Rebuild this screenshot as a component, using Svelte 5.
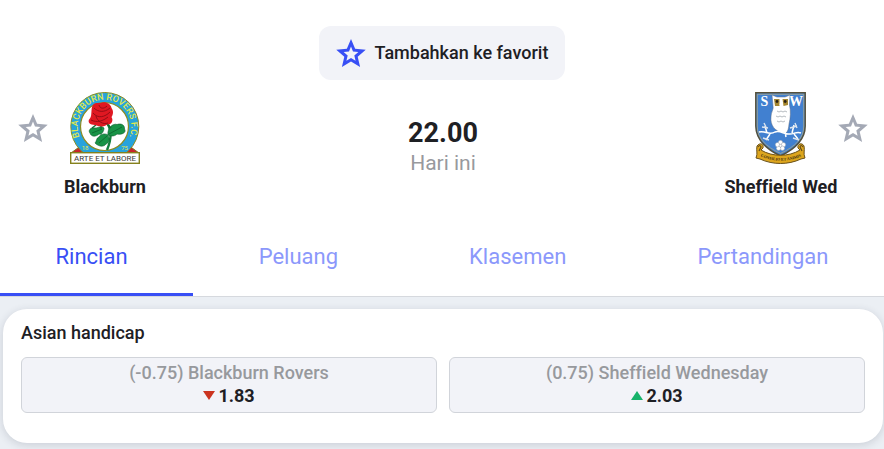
<script>
  let activeTab = $state('Rincian');
  let favorites = $state({ match: false, home: false, away: false });

  const tabs = ['Rincian', 'Peluang', 'Klasemen', 'Pertandingan'];

  const odds = [
    { label: '(-0.75) Blackburn Rovers', value: '1.83', trend: 'down' },
    { label: '(0.75) Sheffield Wednesday', value: '2.03', trend: 'up' }
  ];

  function toggleFavorite(key) {
    favorites[key] = !favorites[key];
  }
</script>

{#snippet star()}
  <svg class="star" viewBox="2 2 20 19" aria-hidden="true">
    <path d="M22 9.24l-7.19-.62L12 2 9.19 8.63 2 9.24l5.46 4.73L5.82 21 12 17.27 18.18 21l-1.63-7.03L22 9.24zM12 14.85l-3.1 1.9.85-3.55L7 10.8l3.65-.3L12 7.1l1.35 3.4 3.65.3-2.75 2.4.85 3.55L12 14.85z" />
  </svg>
{/snippet}

<div class="match">
  <header class="summary">
    <button class="favorite" aria-pressed={favorites.match} onclick={() => toggleFavorite('match')}>
      {@render star()}
      Tambahkan ke favorit
    </button>

    <div class="teams">
      <div class="side">
        <button class="star-button" aria-label="Blackburn" aria-pressed={favorites.home} onclick={() => toggleFavorite('home')}>
          {@render star()}
        </button>
        <div class="team">
          <svg class="crest" viewBox="0 0 70 72" aria-hidden="true">
            <defs>
              <path id="ring-text" d="M9.9 45.2A26.8 26.8 0 1 1 59.1 45.2" />
            </defs>
            <path d="M1 61L12 53H58L69 61Z" fill="#c8242b" stroke="#7d7a1c" />
            <circle cx="34.8" cy="34.5" r="34" fill="#27a3dc" stroke="#8c8b20" stroke-width="1" />
            <circle cx="34.5" cy="34.5" r="24" fill="#fff" stroke="#8c8b20" stroke-width="1.2" />
            <text class="ring">
              <textPath href="#ring-text" startOffset="50%">BLACKBURN ROVERS F.C.</textPath>
            </text>
            <text class="year" x="15" y="58">18</text>
            <text class="year" x="54.5" y="58">75</text>
            <path d="M37 31C42 38 42 46 37 58" fill="none" stroke="#14803d" stroke-width="2.4" />
            <path d="M38 43C37 36 43 31 47 32.5C51 31 55 33 54.5 37C57 41 51 43 47 42C44 45 40 44 38 43Z" fill="#189346" stroke="#0c5c2c" stroke-width=".6" />
            <path d="M34 36C31 33 28 36 25 36C20 35 18 39 20 41C21 45 26 45 29 42C32 43 34 39 34 36Z" fill="#189346" stroke="#0c5c2c" stroke-width=".6" />
            <path d="M38 43C35 41 30 42 29 45C26 46 27 49 25 51C29 55 34 55 36 52C39 51 40 47 38 43Z" fill="#189346" stroke="#0c5c2c" stroke-width=".6" />
            <path d="M39 42L52 35M22 41L32 37M37 44L29 51" fill="none" stroke="#0b5c2b" stroke-width=".7" />
            <path d="M26 33L22 36M31 33L31 38M37 32L41 36" stroke="#126b34" stroke-width="1.4" />
            <path d="M22 15C24 9 29 12 32 10.5C36 9.500 41 12 41.500 16C44 19 43 23 41.500 25C44 29 41 33 37 32.500C33 36 28 34 25 33C20 33 17 30 19.500 27C22 25 21 19 22 15Z" fill="#df1822" />
            <path d="M24 16C28 20 34 21 40 16M23 21C28 27 35 25 40 20M21 28C27 31 33 29 38 25M29 13C30 17 34 17 37 14M26 24C27 29 33 33 38 31" fill="none" stroke="#8d0b13" stroke-width=".9" />
            <rect x=".7" y="60.7" width="68.6" height="10.6" fill="#fff" stroke="#85811d" stroke-width="1.4" />
            <text class="motto" x="35" y="68.8">ARTE ET LABORE</text>
          </svg>
          <span class="name">Blackburn</span>
        </div>
      </div>

      <div class="kickoff">
        <time class="time" datetime="22:00">22.00</time>
        <span class="day">Hari ini</span>
      </div>

      <div class="side">
        <div class="team">
          <svg class="crest" viewBox="0 0 52 72" aria-hidden="true">
            <defs>
              <path id="scroll-text" d="M5 64Q26 73.500 47 64" />
            </defs>
            <path d="M.8.8H50.2V34C50.2 47 42 56 25.5 64C9 56 .8 47 .8 34Z" fill="#4180d0" stroke="#56513b" stroke-width="1.5" />
            <path d="M2.3 2.3H48.7V34C48.7 46 41 54 25.5 61.5C10 54 2.3 46 2.3 34Z" fill="none" stroke="#c8b678" stroke-width=".6" />
            <text class="initial" x="9.5" y="13.5">S</text>
            <text class="initial" x="41" y="13.5">W</text>
            <path d="M17 3L22 5H30L35 3L34.500 13C36 19 35.500 26 34 32C33.500 38 32 42 29 41C20 40 15 33 16 25C16 20 19 17 18 14Z" fill="#fff" stroke="#5b6a84" stroke-width=".5" />
            <path d="M19 7H24.5V14H20ZM27.500 7H33V13L28.500 14Z" fill="#a5862f" />
            <circle cx="22" cy="9.5" r="1.4" fill="#282015" />
            <circle cx="30.2" cy="9.5" r="1.4" fill="#282015" />
            <path d="M26 8L27.500 13H24.500Z" fill="#fff" />
            <path d="M22 19l2 1 2-1 2 1 2-1 2 1M21 24l2 1 2-1 2 1 2-1 2 1M22 29l2 1 2-1 2 1 2-1" fill="none" stroke="#979da5" stroke-width=".7" />
            <path d="M4 40C10 38 14 44 20 40C26 38 29 43 35 42C39 42 42 39 46 41M12 41L10 34M15 42L11 48M37 41L39 33M39 42L43 47M30 40L31 45" fill="none" stroke="#fff" stroke-width="1.5" />
            <path d="M7 35l6 1M9 31l2 4M8 46l6 2M35 36l7-2M40 31l2 5M38 46l6 2" stroke="#dce4ee" stroke-width="1.4" />
            <g fill="#fff" stroke="#8b939e" stroke-width=".4">
              <circle cx="25.5" cy="50.5" r="2.2" />
              <circle cx="28.500" cy="52.7" r="2.2" />
              <circle cx="27.400" cy="56.2" r="2.2" />
              <circle cx="23.600" cy="56.2" r="2.2" />
              <circle cx="22.500" cy="52.7" r="2.2" />
              <circle cx="25.5" cy="53.7" r="1.4" />
            </g>
            <path d="M2 54C5 50 9 52 8 56L6 58C17 65 34 65 45 58L43 56C42 52 47 50 49 54C50 59 48 61 50 66L46 67C33 73 18 73 5 67L1 66C3 61 1 59 2 54Z" fill="#dda51d" stroke="#695019" stroke-width="1" />
            <path d="M3 55Q5 52 6 55L4 59M48 55Q46 52 45 55L47 59" fill="none" stroke="#604b1c" stroke-width="1.2" />
            <text class="scroll">
              <textPath href="#scroll-text" startOffset="50%">CONSILIO ET ANIMIS</textPath>
            </text>
          </svg>
          <span class="name">Sheffield Wed</span>
        </div>
        <button class="star-button" aria-label="Sheffield Wed" aria-pressed={favorites.away} onclick={() => toggleFavorite('away')}>
          {@render star()}
        </button>
      </div>
    </div>
  </header>

  <nav class="tabs">
    {#each tabs as tab}
      <button class="tab" class:active={activeTab === tab} onclick={() => (activeTab = tab)}>
        {tab}
      </button>
    {/each}
  </nav>

  <main class="content">
    <section class="card">
      <h2>Asian handicap</h2>
      <div class="odds">
        {#each odds as odd}
          <button class="odd">
            <span class="odd-label">{odd.label}</span>
            <span class="odd-value">
              <svg class="trend {odd.trend}" viewBox="0 0 12 9" aria-hidden="true">
                {#if odd.trend === 'down'}
                  <path d="M0 0H12L6 9Z" />
                {:else}
                  <path d="M0 9H12L6 0Z" />
                {/if}
              </svg>
              {odd.value}
            </span>
          </button>
        {/each}
      </div>
    </section>
  </main>
</div>

<style>
  :global(body) {
    margin: 0;
    background: #ebeff4;
    color: #1e2024;
    font-family: Roboto, 'Liberation Sans', sans-serif;
    font-size: 18px;
    font-variant-ligatures: none;
    line-height: 24px;
  }

  button {
    margin: 0;
    padding: 0;
    border: 0;
    background: none;
    color: inherit;
    font: inherit;
    font-variant-ligatures: none;
    cursor: pointer;
  }

  .match {
    overflow: hidden;
  }

  .summary {
    display: flex;
    flex-direction: column;
    align-items: center;
    gap: 12px;
    padding-top: 26px;
    background: #fff;
  }

  .favorite {
    display: flex;
    align-items: center;
    gap: 9px;
    padding: 13px 17px;
    border-radius: 12px;
    background: #f2f3f8;
    font-weight: 500;
  }

  .star {
    display: block;
    width: 30px;
    height: 28px;
    fill: #a4a9b5;
  }

  .favorite .star {
    fill: #384ff5;
  }

  .teams {
    display: flex;
    justify-content: space-between;
    box-sizing: border-box;
    width: 100%;
    padding: 0 16px 0 18px;
  }

  .side {
    display: flex;
    align-items: flex-start;
  }

  .star-button {
    padding-top: 22px;
  }

  .team {
    display: flex;
    flex-direction: column;
    align-items: center;
    gap: 11px;
    width: 114px;
  }

  .crest {
    display: block;
    height: 72px;
  }

  .name {
    font-weight: 700;
    white-space: nowrap;
  }

  .kickoff {
    display: flex;
    flex-direction: column;
    align-items: center;
    padding-top: 25px;
  }

  .time {
    font-size: 27px;
    font-weight: 700;
    line-height: 32px;
  }

  .day {
    color: #98999d;
    font-size: 21px;
    line-height: 28px;
  }

  .tabs {
    display: flex;
    margin: 0 -10px;
    padding-top: 20px;
    border-bottom: 1px solid #d6d9de;
    background: #fff;
  }

  .tab {
    flex: 1 1 auto;
    padding: 24px 0 22px;
    border-bottom: 3px solid transparent;
    color: #8b98fb;
    font-size: 22px;
    line-height: 28px;
  }

  .tab.active {
    border-color: #384ff5;
    color: #384ff5;
  }

  .content {
    padding: 12px 1px 24px 3px;
  }

  .card {
    padding: 12px 18px 30px;
    border-radius: 24px;
    background: #fff;
    box-shadow: 0 2px 8px rgba(30, 40, 60, 0.16);
  }

  h2 {
    margin: 0 0 12px;
    font-size: 18px;
    font-weight: 500;
  }

  .odds {
    display: grid;
    grid-template-columns: 1fr 1fr;
    gap: 12px;
  }

  .odd {
    display: flex;
    flex-direction: column;
    align-items: center;
    padding: 3px 12px 5px;
    border: 1px solid #d1d4da;
    border-radius: 6px;
    background: #f2f3f8;
    line-height: 23px;
  }

  .odd-label {
    color: #97999d;
    font-weight: 500;
  }

  .odd-value {
    display: flex;
    align-items: center;
    gap: 3px;
    font-weight: 700;
  }

  .trend {
    width: 12px;
    height: 9px;
  }

  .down {
    fill: #cb3420;
  }

  .up {
    fill: #17b26a;
  }

  .ring {
    fill: #e3e94a;
    font-size: 9px;
    font-weight: 500;
    text-anchor: middle;
  }

  .year {
    fill: #e3e94a;
    font-size: 6px;
    text-anchor: middle;
  }

  .motto {
    fill: #3a3a35;
    font-size: 8px;
    text-anchor: middle;
  }

  .initial {
    fill: #fff;
    font-family: 'Liberation Serif', serif;
    font-size: 14px;
    font-weight: 700;
    text-anchor: middle;
  }

  .scroll {
    fill: #382b10;
    font-family: 'Liberation Serif', serif;
    font-size: 4px;
    font-weight: 700;
    text-anchor: middle;
  }
</style>
